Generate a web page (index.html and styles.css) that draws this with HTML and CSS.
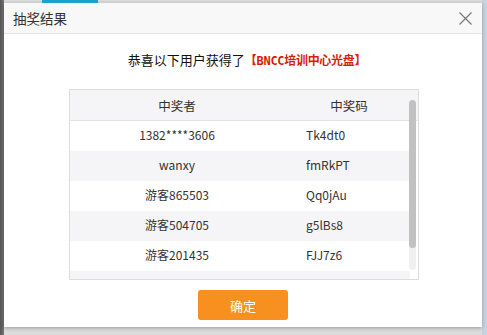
FILE: index.html
```html
<!DOCTYPE html>
<html lang="zh-CN">
<head>
  <meta charset="UTF-8" />
  <title>抽奖结果</title>
  <link rel="stylesheet" href="styles.css">
</head>
<body>
  <div class="backdrop">
    <div class="tab"></div>
    <div class="dialog">
      <div class="dialog-head">
        <span class="title">抽奖结果</span>
        <span class="close">
          <svg width="13" height="13" viewBox="0 0 13 13"><path d="M0.5 0.5 L12.5 12.5 M12.5 0.5 L0.5 12.5" stroke="#777" stroke-width="1.2" fill="none"/></svg>
        </span>
      </div>
      <div class="dialog-body">
        <p class="congrats">恭喜以下用户获得了<span class="prize">【BNCC培训中心光盘】</span></p>
        <div class="result">
          <div class="result-row result-head">
            <div class="c1">中奖者</div>
            <div class="c2">中奖码</div>
          </div>
          <div class="result-list">
            <div class="result-row"><div class="c1">1382****3606</div><div class="c2">Tk4dt0</div></div>
            <div class="result-row alt"><div class="c1">wanxy</div><div class="c2">fmRkPT</div></div>
            <div class="result-row"><div class="c1">游客865503</div><div class="c2">Qq0jAu</div></div>
            <div class="result-row alt"><div class="c1">游客504705</div><div class="c2">g5lBs8</div></div>
            <div class="result-row"><div class="c1">游客201435</div><div class="c2">FJJ7z6</div></div>
            <div class="result-row alt"><div class="c1"></div><div class="c2"></div></div>
          </div>
          <div class="scroll-track"><div class="scroll-thumb"></div></div>
        </div>
        <div class="actions">
          <button class="ok">确定</button>
        </div>
      </div>
    </div>
  </div>
</body>
</html>
```

FILE: styles.css
```css
html, body {
  margin: 0;
  padding: 0;
  width: 487px;
  height: 335px;
  overflow: hidden;
  font-family: "Noto Sans CJK SC", "Noto Sans", sans-serif;
}

.backdrop {
  position: relative;
  height: 335px;
  box-sizing: border-box;
  padding: 3px 5px 0 4px;
  background: linear-gradient(90deg, #555 0, #777 4px, #dcdcdc 4px, #dcdcdc 482px, #c9d4e2 482px);
}

.tab {
  position: absolute;
  left: 42px;
  top: 0;
  width: 56px;
  height: 3px;
  background: #1aa3c9;
}

.dialog {
  background: #fff;
  height: 324px;
  box-shadow: 0 1px 4px rgba(0, 0, 0, 0.3);
  display: flex;
  flex-direction: column;
}

.dialog-head {
  height: 30px;
  background: #f8f8f8;
  border-bottom: 1px solid #e6e6e6;
  display: flex;
  align-items: center;
  justify-content: space-between;
  padding: 0 10px 0 9px;
}

.title {
  font-size: 13.5px;
  color: #333;
}

.close {
  display: flex;
  margin-top: 1px;
}

.dialog-body {
  flex: 1;
  display: flex;
  flex-direction: column;
  align-items: center;
}

.congrats {
  margin: 16px 0 0;
  font-size: 13px;
  line-height: 20px;
  color: #111;
  text-align: center;
  padding-left: 8px;
}

.prize {
  color: #d81e06;
  font-family: "DejaVu Sans Mono", "Noto Sans CJK SC", monospace;
  font-size: 12px;
  letter-spacing: -0.3px;
  font-weight: bold;
}

.result {
  position: relative;
  margin: 18px 0 0 2px;
  width: 348px;
  height: 189px;
  border: 1px solid #dcdcdc;
  overflow: hidden;
}

.result-row {
  display: grid;
  grid-template-columns: 214px 1fr;
  height: 30px;
  align-items: center;
  font-size: 12px;
  color: #333;
}

.result-row .c1 {
  text-align: center;
  padding-bottom: 3px;
}

.result-row .c2 {
  padding-left: 22px;
  padding-bottom: 3px;
}

.result-head {
  background: #f5f5f7;
  border-bottom: 1px solid #e2e2e2;
  font-size: 12.5px;
  color: #333;
}

.result-head .c2 {
  padding-left: 0;
  padding-right: 4px;
  text-align: center;
  padding-bottom: 0;
}

.result-head .c1 {
  padding-bottom: 0;
}

.result-list {
  margin-right: 8px;
}

.result-row.alt {
  background: #f5f5f7;
}

.scroll-track {
  position: absolute;
  right: 2px;
  top: 10px;
  width: 7px;
  height: 170px;
  border-radius: 4px;
  background: #f0f0f0;
}

.scroll-thumb {
  height: 148px;
  border-radius: 4px;
  background: #c1c1c1;
}

.actions {
  margin-top: 10px;
}

.ok {
  width: 90px;
  height: 30px;
  border: none;
  border-radius: 3px;
  background: #f7901e;
  color: #fff;
  font-family: "Noto Sans CJK SC", sans-serif;
  font-size: 13px;
}
```
